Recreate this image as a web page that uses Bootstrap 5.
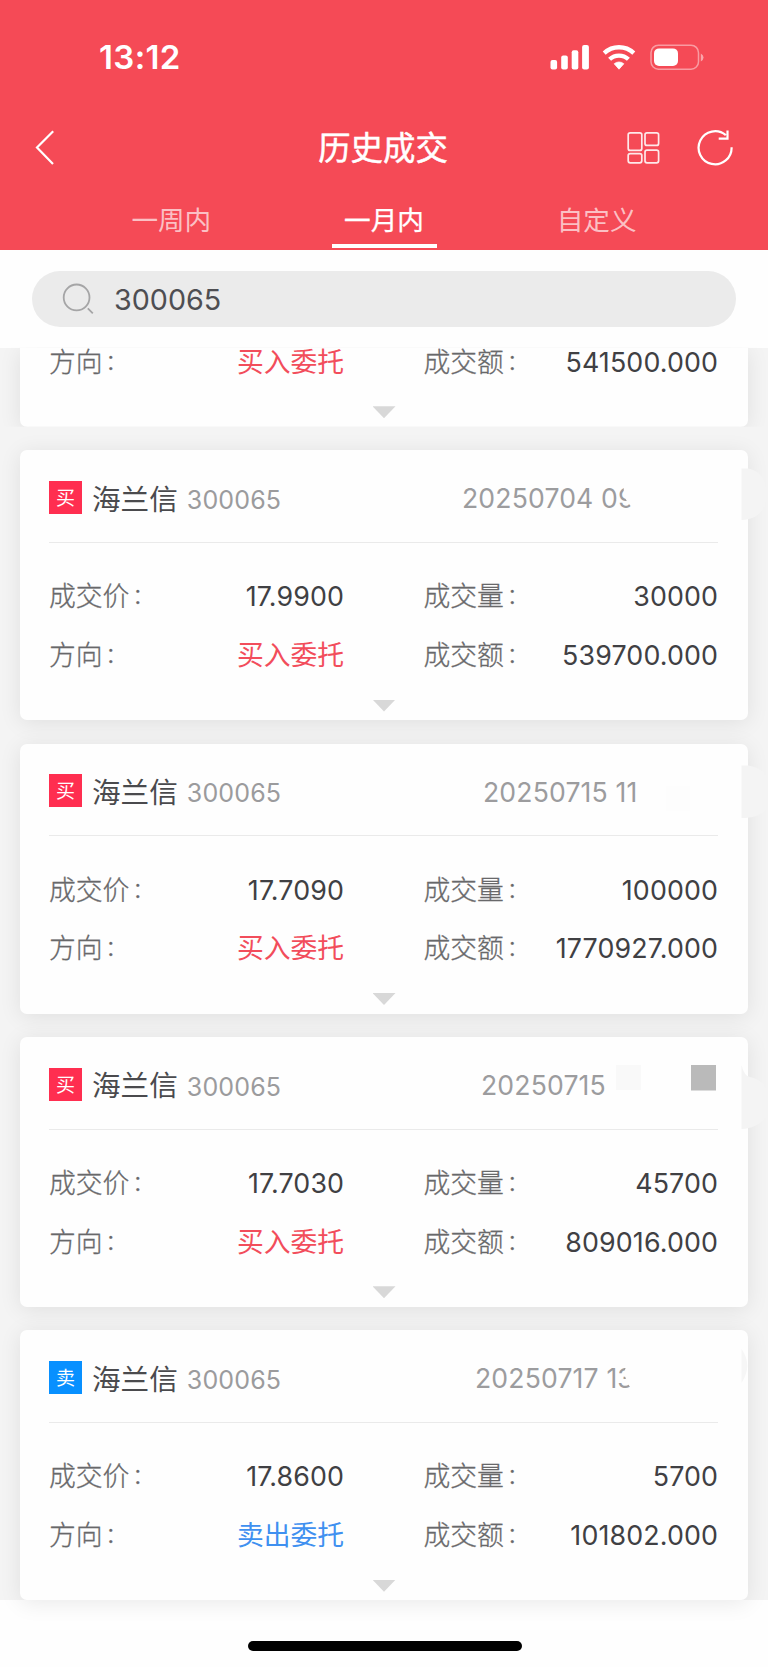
<!DOCTYPE html>
<html lang="zh-CN">
<head>
<meta charset="utf-8">
<meta name="viewport" content="width=device-width, initial-scale=1">
<title>历史成交</title>
<link rel="stylesheet" href="https://cdn.jsdelivr.net/npm/bootstrap@5.3.0/dist/css/bootstrap.min.css">
<style>
  body { font-family: Inter, "Noto Sans CJK SC", sans-serif; background: #fefefe; color: #404043; width: 768px; height: 1667px; overflow: hidden; }
  .top-area { background: #f54a56; height: 249.6px; color: #fff; }
  .status-bar { height: 114px; padding: 0 64px 0 99px; }
  .clock { font-size: 33px; font-weight: 600; line-height: 1; letter-spacing: .35px; }
  .title-bar { height: 68px; padding: 0 34px; }
  .page-title { font-size: 32.4px; line-height: 1; -webkit-text-stroke: .5px #fff; margin: 3px 0 0 -1px; }
  .tab-strip { height: 67.4px; padding: 0 65px; font-size: 26.6px; }
  .tab-strip a { color: rgba(255,255,255,.66); text-decoration: none; height: 67.4px; line-height: 77px; position: relative; }
  .tab-strip a.active { color: #fff; -webkit-text-stroke: .3px #fff; }
  .tab-strip a.active::after { content: ""; position: absolute; left: 50%; bottom: 1.2px; width: 105px; margin-left: -52.5px; height: 4.4px; background: #fff; }
  .search-area { height: 98px; padding: 21.3px 32px 0; }
  .search-box { height: 56.4px; border-radius: 29px; background: #ebebeb; padding-left: 30px; font-size: 28.7px; color: #4e4e52; }
  .deal-list { background: #f4f4f4; height: 1252.8px; padding: 0 20px; }
  .deal { background: #fefefe; height: 270px; border-radius: 7px; padding: 0 30px 0 29px; margin-bottom: 23.4px; box-shadow: 0 3px 22px rgba(0,0,0,.085); position: relative; }
  .deal-cut { height: 79.2px; border-radius: 0 0 7px 7px; padding-top: 0; clip-path: inset(0 -20px 0 -20px); }
  .deal-head { height: 92.6px; border-bottom: 1.5px solid #eaeaea; padding-top: 3px; }
  .side { width: 33px; height: 33px; font-size: 19px; line-height: 35px; background: #ff2e50; color: #fff; text-align: center; }
  .side-sell { background: #0890ff; }
  .stock { font-size: 28.6px; margin-left: 10px; color: #4a4a4d; line-height: 1; padding-top: 5px; }
  .code { font-size: 25px; margin-left: 9px; color: #9b9b9d; padding-top: 6px; letter-spacing: .15px; }
  .stamp { font-size: 26.6px; color: #9c9c9e; position: absolute; line-height: 32px; top: 32px; white-space: nowrap; letter-spacing: .15px; }
  .deal-body { padding-top: 24px; }
  .pair { height: 58.9px; font-size: 26.8px; }
  .cell-l { width: 295px; }
  .cell-r { width: 294.5px; }
  .pair span:last-child { letter-spacing: .15px; margin-right: -.15px; }
  .pair .buy:last-child, .pair .sell:last-child { letter-spacing: 0; }
  .lab { color: #68686a; font-weight: 300; -webkit-text-stroke: .3px #68686a; }
  .lab::after { content: ":"; margin-left: 4.5px; font-family: Inter; position: relative; top: -2px; }
  .buy { color: #f24d5b; }
  .sell { color: #3f90f0; }
  .caret { position: absolute; left: 352.5px; bottom: 8.6px; width: 23px; height: 12px; background: #d8d8d8; clip-path: polygon(0 0, 100% 0, 50% 100%); }
  .smudge { position: absolute; left: 0; top: 0; overflow: visible; }
  .home-bar { width: 274px; height: 10px; border-radius: 5px; background: #000; margin: 40.8px auto 0; position: relative; left: .5px; }
</style>
</head>
<body>
<header class="top-area">
  <div class="status-bar d-flex align-items-center justify-content-between">
    <span class="clock">13:12</span>
    <svg width="154" height="26" viewBox="0 0 154 26" fill="#fff">
      <rect x=".5" y="16" width="6.6" height="9.6" rx="2"/><rect x="11.2" y="11.4" width="6.6" height="14.2" rx="2"/><rect x="21.7" y="6.2" width="6.6" height="19.4" rx="2"/><rect x="32.100" y="1" width="6.8" height="24.600" rx="2"/>
      <g fill="none" stroke="#fff" stroke-width="4.3"><path d="M54.2 9.1a21.6 21.6 0 0 1 29.6 0"/><path d="M59.6 15.3a13.6 13.6 0 0 1 18.8 0"/></g>
      <path d="M64.2 19.8a7.3 7.3 0 0 1 9.6 0L69 25.2z" stroke="#fff" stroke-width=".8" stroke-linejoin="round"/>
      <rect x="101" y="1.2" width="47.5" height="24" rx="7.5" fill="none" stroke="#fff" stroke-opacity=".45" stroke-width="1.5"/>
      <rect x="104" y="4.4" width="24" height="17.6" rx="5"/>
      <path d="M150.8 9.5q2.7 1.3 2.7 4t-2.7 4z" fill-opacity=".5"/>
    </svg>
  </div>
  <div class="title-bar d-flex align-items-center justify-content-between position-relative">
    <svg width="22" height="38" viewBox="0 0 22 38" fill="none" stroke="#fff" stroke-width="2.2"><path d="M19.2 2.2 3 18.6 19 35"/></svg>
    <span class="page-title position-absolute start-50 translate-middle-x">历史成交</span>
    <svg width="108" height="38" viewBox="0 0 108 38" fill="none" stroke="#fff">
      <g stroke-width="1.7" stroke-opacity=".88"><rect x="2.2" y="3.8" width="13.6" height="17.6" rx="2"/><rect x="19" y="3.8" width="13.6" height="12.6" rx="2"/><rect x="2.2" y="24.6" width="13.6" height="9.2" rx="2"/><rect x="19" y="21.2" width="13.6" height="12.6" rx="2"/></g>
      <path stroke-width="2.2" d="M105.6 18.2A16.5 16.500 0 1 1 99.800 6.200M101.500 1.500v8.100h-8.800"/>
    </svg>
  </div>
  <nav class="tab-strip d-flex text-center">
    <a class="flex-fill w-100" href="#">一周内</a>
    <a class="flex-fill w-100 active" href="#">一月内</a>
    <a class="flex-fill w-100" href="#">自定义</a>
  </nav>
</header>

<div class="search-area">
  <div class="search-box d-flex align-items-center">
    <svg width="52" height="34" viewBox="0 0 52 34" fill="none" stroke="#a5a5a6" stroke-width="1.8"><circle cx="14.6" cy="15.4" r="12.9"/><path d="m25.8 26.4 5 5"/></svg>
    <span>300065</span>
  </div>
</div>

<main class="deal-list">
  <section class="deal deal-cut">
    <div class="pair d-flex" style="height:29px">
      <div class="cell-l d-flex justify-content-between align-items-center"><span class="lab">方向</span><span class="buy">买入委托</span></div>
      <div class="cell-r ms-auto d-flex justify-content-between align-items-center"><span class="lab">成交额</span><span>541500.000</span></div>
    </div>
    <i class="caret"></i>
  </section>

  <section class="deal">
    <div class="deal-head d-flex align-items-center"><span class="side">买</span><span class="stock">海兰信</span><span class="code">300065</span><span class="stamp" style="left:442px">20250704 09</span></div>
    <svg class="smudge" width="748" height="92"><path fill="#fefefe" d="M721 18H630C612 20 602 34 604 44C606 55 620 67 640 70H721z"/><path fill="#f4f4f4" d="M721.500 18.500H728C738 20 745 28 746 38V52C743 62 735 70 721.500 70z"/></svg>
    <div class="deal-body">
      <div class="pair d-flex"><div class="cell-l d-flex justify-content-between align-items-center"><span class="lab">成交价</span><span>17.9900</span></div><div class="cell-r ms-auto d-flex justify-content-between align-items-center"><span class="lab">成交量</span><span>30000</span></div></div>
      <div class="pair d-flex"><div class="cell-l d-flex justify-content-between align-items-center"><span class="lab">方向</span><span class="buy">买入委托</span></div><div class="cell-r ms-auto d-flex justify-content-between align-items-center"><span class="lab">成交额</span><span>539700.000</span></div></div>
    </div>
    <i class="caret"></i>
  </section>

  <section class="deal">
    <div class="deal-head d-flex align-items-center"><span class="side">买</span><span class="stock">海兰信</span><span class="code">300065</span><span class="stamp" style="left:463px">20250715 11</span></div>
    <svg class="smudge" width="748" height="92"><path fill="#fdfdfd" d="M646 42h24v25h-24z"/><path fill="#f4f4f4" d="M721.500 21.500H728C738 23 744 28 746 32V65C742 70 735 74 721.500 74z"/></svg>
    <div class="deal-body">
      <div class="pair d-flex"><div class="cell-l d-flex justify-content-between align-items-center"><span class="lab">成交价</span><span>17.7090</span></div><div class="cell-r ms-auto d-flex justify-content-between align-items-center"><span class="lab">成交量</span><span>100000</span></div></div>
      <div class="pair d-flex"><div class="cell-l d-flex justify-content-between align-items-center"><span class="lab">方向</span><span class="buy">买入委托</span></div><div class="cell-r ms-auto d-flex justify-content-between align-items-center"><span class="lab">成交额</span><span>1770927.000</span></div></div>
    </div>
    <i class="caret"></i>
  </section>

  <section class="deal">
    <div class="deal-head d-flex align-items-center"><span class="side">买</span><span class="stock">海兰信</span><span class="code">300065</span><span class="stamp" style="left:461px">20250715</span></div>
    <svg class="smudge" width="748" height="93"><path fill="#f9f9f9" d="M596 28h25v25h-25z"/><path fill="#bababa" d="M671 28h25v25.500h-25z"/><path fill="#f4f4f4" d="M721.500 28Q724 39 730 40C740 42 746 48 748 58V76C743 86 735 91 721.500 92z"/></svg>
    <div class="deal-body">
      <div class="pair d-flex"><div class="cell-l d-flex justify-content-between align-items-center"><span class="lab">成交价</span><span>17.7030</span></div><div class="cell-r ms-auto d-flex justify-content-between align-items-center"><span class="lab">成交量</span><span>45700</span></div></div>
      <div class="pair d-flex"><div class="cell-l d-flex justify-content-between align-items-center"><span class="lab">方向</span><span class="buy">买入委托</span></div><div class="cell-r ms-auto d-flex justify-content-between align-items-center"><span class="lab">成交额</span><span>809016.000</span></div></div>
    </div>
    <i class="caret"></i>
  </section>

  <section class="deal">
    <div class="deal-head d-flex align-items-center"><span class="side side-sell">卖</span><span class="stock">海兰信</span><span class="code">300065</span><span class="stamp" style="left:455px">20250717 13</span></div>
    <svg class="smudge" width="748" height="92"><path fill="#fefefe" d="M721 12H650C625 16 602 30 605 46Q606 52 610 57Q612 68 640 66H721z"/><path fill="#f6f6f6" d="M721.500 19Q733 35 721.500 53z"/></svg>
    <div class="deal-body">
      <div class="pair d-flex"><div class="cell-l d-flex justify-content-between align-items-center"><span class="lab">成交价</span><span>17.8600</span></div><div class="cell-r ms-auto d-flex justify-content-between align-items-center"><span class="lab">成交量</span><span>5700</span></div></div>
      <div class="pair d-flex"><div class="cell-l d-flex justify-content-between align-items-center"><span class="lab">方向</span><span class="sell">卖出委托</span></div><div class="cell-r ms-auto d-flex justify-content-between align-items-center"><span class="lab">成交额</span><span>101802.000</span></div></div>
    </div>
    <i class="caret"></i>
  </section>
</main>
<div class="home-bar"></div>
<script src="https://cdn.jsdelivr.net/npm/bootstrap@5.3.0/dist/js/bootstrap.bundle.min.js"></script>
</body>
</html>
